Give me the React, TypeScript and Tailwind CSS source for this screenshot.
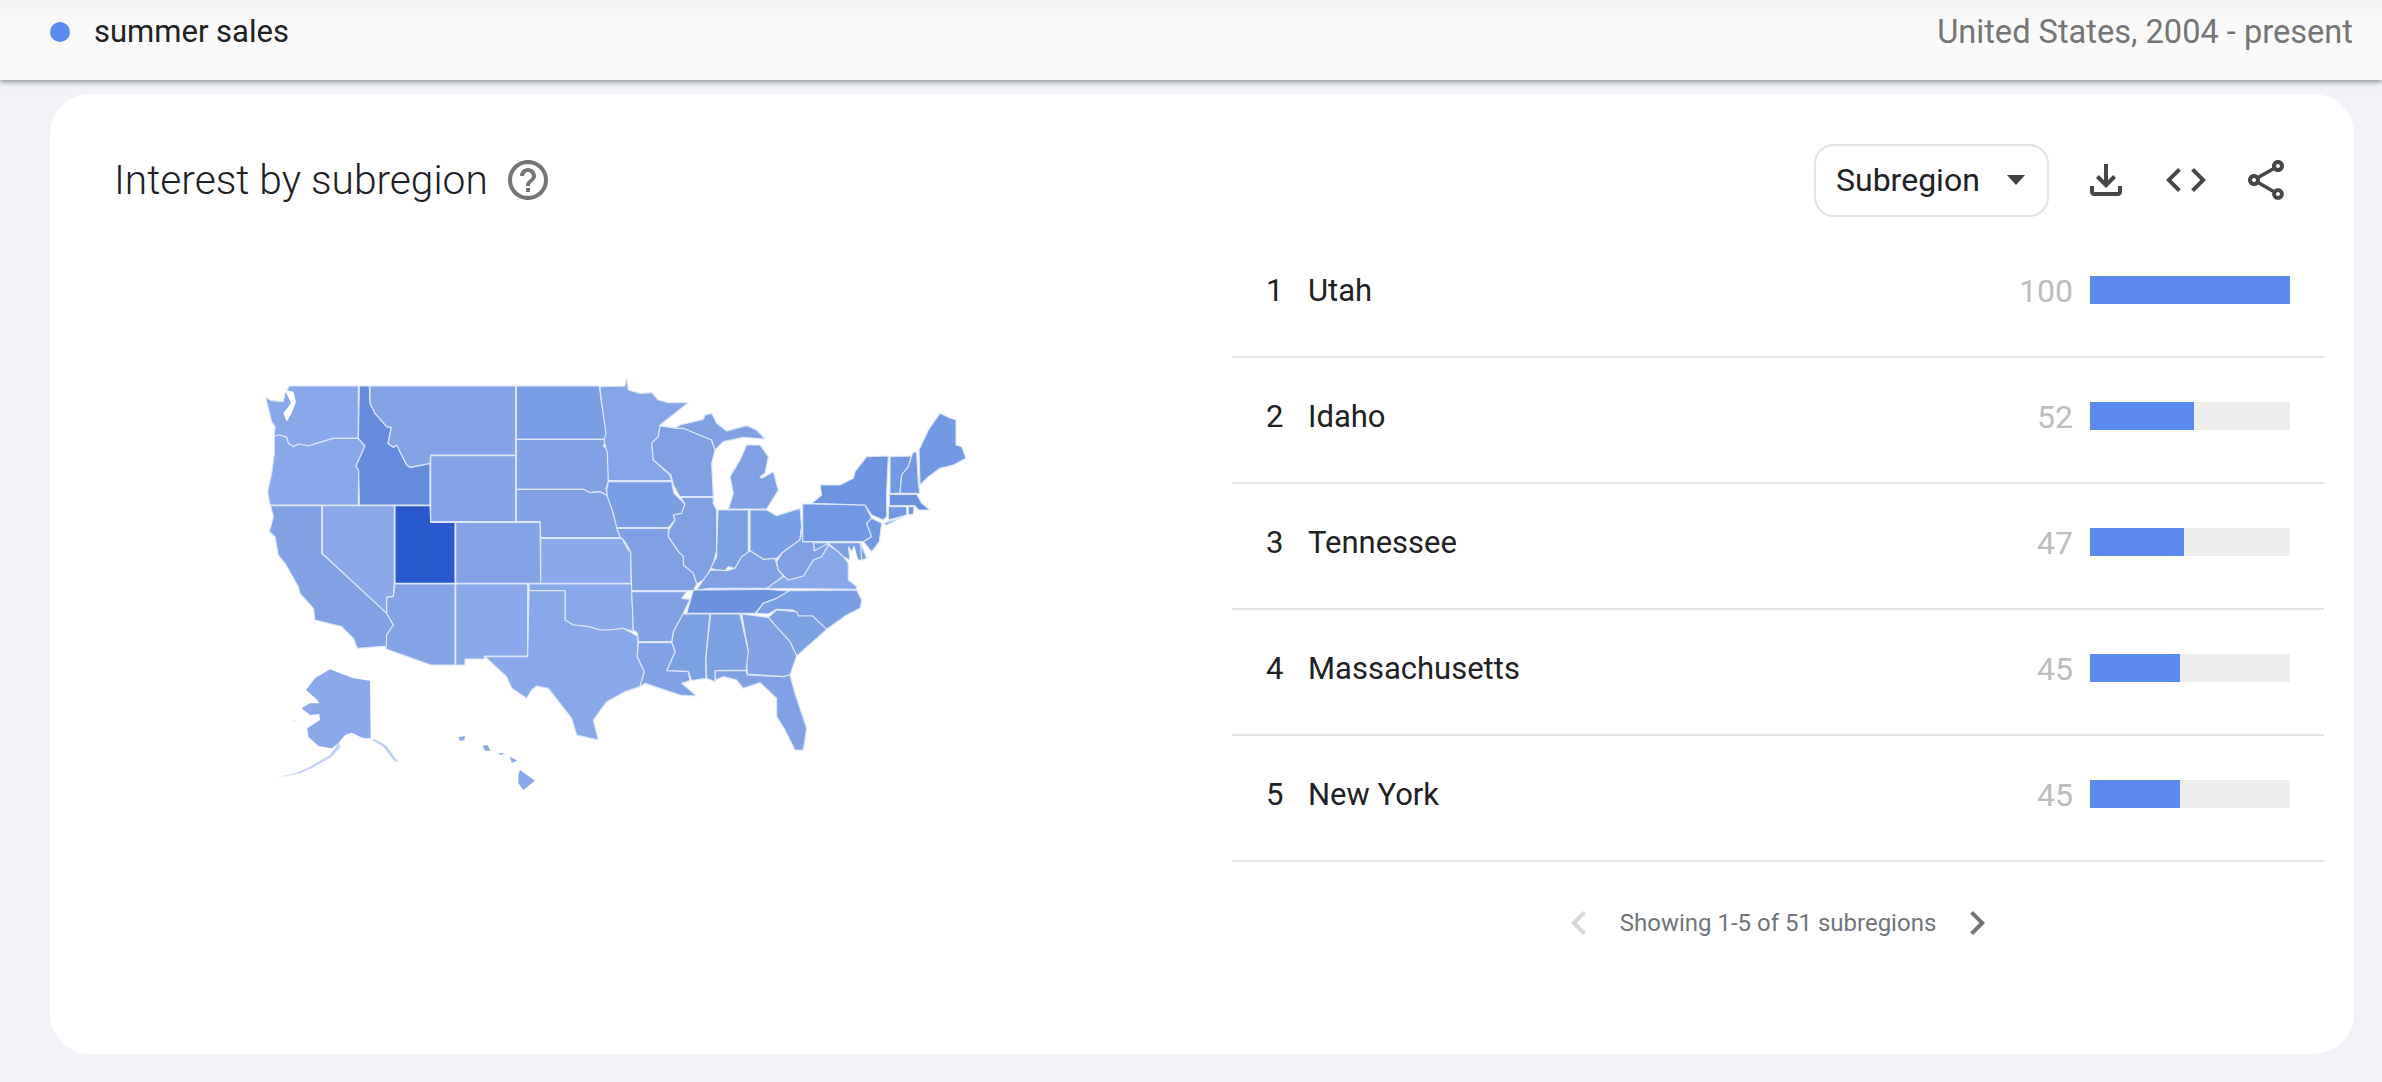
import React from 'react'

const fontClass = "font-['Roboto','Open_Sans',sans-serif]"

type Region = { rank: number; name: string; value: number }

const regions: Region[] = [
  { rank: 1, name: 'Utah', value: 100 },
  { rank: 2, name: 'Idaho', value: 52 },
  { rank: 3, name: 'Tennessee', value: 47 },
  { rank: 4, name: 'Massachusetts', value: 45 },
  { rank: 5, name: 'New York', value: 45 },
]

// west states, map units = 3x page pixels from (230, 360)
const westStates: [string, string][] = [
  ['#87a8ea', '107,112 125,122 160,125 165,100 178,78 385,78 385,235 310,235 260,250 235,258 205,252 190,260 175,250 170,232 150,225 133,228 135,200 125,185'],
  ['#87a8ea', '133,228 150,225 170,232 175,250 190,260 205,252 235,258 260,250 310,235 385,235 405,258 378,318 386,330 385,435 120,435 113,395 125,340 133,280'],
  ['#648bde', '388,78 418,78 420,130 435,160 470,200 484,203 474,250 490,262 500,255 530,315 540,322 600,310 600,435 388,435 386,330 378,318 405,258 385,235'],
  ['#82a3e5', '420,78 857,78 857,285 602,285 600,310 540,322 530,315 500,255 490,262 474,250 484,203 470,200 435,160 420,130'],
  ['#7a9ee3', '859,78 1108,78 1115,130 1130,210 1130,238 859,238'],
  ['#80a2e5', '859,238 1130,238 1120,258 1135,270 1135,365 1128,385 1135,408 1110,395 1080,398 1060,388 859,388'],
  ['#82a3e5', '602,287 857,287 857,485 602,485'],
  ['#80a2e5', '859,388 1060,388 1080,398 1110,395 1135,408 1155,480 1175,533 932,533 930,485 859,485'],
  ['#2858cc', '495,437 600,437 602,487 675,487 675,670 495,670'],
  ['#82a3e6', '677,487 930,487 932,670 677,670'],
  ['#89a9ea', '277,437 493,437 493,670 490,710 470,712 470,760 277,580'],
  ['#80a2e5', '122,437 275,437 275,580 470,760 490,795 470,825 470,858 382,865 370,835 335,800 255,780 250,745 210,700 205,680 165,610 145,585 135,530 118,515 130,470'],
  ['#82a3e6', '495,672 675,672 675,915 603,915 468,867 470,825 490,795 470,760 470,712 490,710'],
  ['#89a9ea', '677,672 893,672 893,888 763,888 763,897 705,897 705,915 677,915'],
  ['#89a9ea', '932,535 1175,535 1195,570 1203,575 1203,670 932,670'],
  ['#87a8e9', '897,672 1205,672 1210,815 1180,805 1140,810 1110,810 1075,800 1030,795 1005,780 1005,692 897,692'],
  ['#87a8e9', '897,692 1005,692 1005,780 1030,795 1075,800 1110,810 1140,810 1180,805 1207,820 1224,830 1222,890 1243,935 1230,980 1185,995 1130,1025 1090,1080 1105,1140 1040,1125 1025,1075 990,1030 955,985 920,978 905,990 890,1015 845,985 830,950 765,890 893,890'],
]

// east states, same scale, origin moved to (600, 360)
const eastStates: [string, string][] = [
  ['#84a5e7', '0,80 75,78 80,55 85,90 120,100 155,98 175,120 205,128 265,128 180,195 175,230 155,250 160,300 210,345 215,362 25,362 22,280 12,240 18,220 5,130'],
  ['#7a9ee3', '25,365 215,365 222,400 255,432 245,460 220,465 225,480 205,503 50,503 40,460 22,410 20,390'],
  ['#7fa1e4', '180,198 230,205 250,205 335,240 345,270 335,310 340,410 240,410 220,375 213,345 160,300 155,250 175,230'],
  ['#7fa1e4', '225,205 240,195 310,178 315,165 335,160 350,190 380,213 440,197 470,210 495,237 430,232 370,245 345,270 335,240 250,205'],
  ['#7fa1e4', '440,255 480,255 505,290 495,340 480,350 485,355 520,335 535,390 500,447 385,447 400,400 390,350 420,300'],
  ['#7fa1e4', '243,412 340,412 340,430 350,450 350,570 340,610 325,640 310,660 290,672 280,640 250,615 250,590 235,575 205,530 207,510 225,480 220,465 245,460 255,432'],
  ['#7ca0e4', '354,450 445,450 445,585 425,590 405,625 385,620 375,632 350,630 332,625 350,590 350,570'],
  ['#7a9ee3', '450,450 500,450 530,467 600,445 605,500 600,540 565,565 545,580 525,600 490,598 450,572'],
  ['#7fa1e4', '332,630 380,632 405,625 425,590 450,572 490,598 525,595 535,630 550,648 505,685 330,685 290,690 310,660'],
  ['#6a92df', '280,690 330,690 500,688 568,693 530,715 490,730 465,760 260,760'],
  ['#7a9ee3', '568,692 770,690 785,720 780,745 740,765 680,808 635,768 590,768 580,750 530,748 505,762 468,760 490,730 530,715'],
  ['#7ca0e4', '505,772 530,750 590,755 595,768 638,768 680,808 590,888 570,845 520,790'],
  ['#80a2e5', '425,762 505,772 520,790 570,845 590,888 570,945 550,950 442,942 438,880 445,875'],
  ['#80a2e5', '345,932 438,932 442,945 550,950 570,945 585,1000 620,1105 610,1170 585,1170 555,1110 530,1070 530,1015 480,968 430,985 410,960 370,950 345,960'],
  ['#7ca0e4', '332,762 420,762 445,875 438,930 345,932 345,965 320,955 317,895'],
  ['#7ca0e4', '250,762 330,762 317,895 318,955 275,962 265,935 200,932 225,875 215,845 220,815 245,765'],
  ['#80a2e5', '115,848 215,848 225,875 200,932 265,935 270,962 245,970 290,1008 240,1005 180,985 135,970 120,980 133,935 112,890'],
  ['#80a2e5', '95,695 260,695 245,715 270,718 250,760 220,815 215,845 115,845 112,818 100,810'],
  ['#7fa1e4', '50,505 205,505 205,530 235,575 250,590 250,615 280,640 290,672 280,692 95,692 92,575 75,545 60,530'],
  ['#87a8e9', '500,685 552,648 565,660 610,648 640,600 665,590 685,555 715,575 730,590 745,610 745,660 770,680 770,688'],
  ['#7fa1e4', '530,605 545,580 565,565 600,540 605,500 608,545 640,545 643,572 680,548 685,555 665,590 640,600 610,648 565,660 552,648 535,630'],
  ['#7198e2', '608,432 635,432 795,435 810,465 815,475 800,490 815,530 790,545 608,545'],
  ['#6d94e0', '635,430 665,405 660,375 720,375 760,355 765,335 800,290 865,288 860,400 860,470 850,480 815,465 795,435'],
  ['#7198e2', '815,475 845,490 838,545 815,575 790,545 815,530 800,490'],
  ['#7ca0e4', '640,548 780,548 790,600 775,600 745,560 750,600 730,590 715,575 685,550 643,572'],
  ['#7ca0e4', '782,548 800,595 785,600'],
  ['#7198e2', '870,290 935,288 925,320 905,345 900,400 870,400'],
  ['#7198e2', '938,278 950,275 955,370 960,400 900,400 905,345 925,320'],
  ['#7198e2', '957,270 985,210 1020,160 1045,172 1068,180 1068,255 1085,260 1098,295 1060,315 1020,325 985,350 960,375'],
  ['#6a92df', '868,403 950,403 965,430 990,450 955,450 945,437 868,437'],
  ['#7198e2', '865,440 920,440 920,465 865,480'],
  ['#7198e2', '925,440 942,440 940,462 925,465'],
  ['#7198e2', '850,490 910,470 860,495'],
]

// alaska and hawaii, no inner borders
const offshore = [
  '300,928 330,940 370,955 420,962 422,1135 400,1135 365,1118 345,1125 325,1150 305,1165 265,1158 235,1130 232,1105 270,1080 268,1062 240,1065 215,1045 240,1030 268,1030 260,1018 228,990 255,955',
  '870,1230 915,1262 880,1290 865,1270 865,1245',
  '840,1190 862,1202 845,1208',
  '758,1158 772,1155 782,1172 765,1172',
  '685,1132 705,1128 703,1140 690,1143',
  '805,1178 828,1182 810,1184',
]

// thin faint bits of alaska
const faintBits = [
  '325,1150 300,1185 240,1220 200,1238 140,1253 210,1240 250,1222 305,1190 332,1160',
  '422,1135 440,1140 470,1158 507,1210 490,1200 460,1160 430,1142',
  '185,1080 205,1088 190,1085',
]

// sound and bay cut-outs
const waterCuts = [
  '165,90 190,95 198,125 185,160 170,185 160,160 183,130',
]

function UsMap() {
  return (
    <svg viewBox="0 0 2250 1320" className="ml-[180px] mt-[128px] h-[440px] w-[750px]">
      <g stroke="#dce6f8" strokeWidth="3.5" strokeLinejoin="round">
        {westStates.map(([fill, points]) => (
          <polygon key={points} fill={fill} points={points} />
        ))}
        <g transform="translate(1110 0)">
          {eastStates.map(([fill, points]) => (
            <polygon key={points} fill={fill} points={points} />
          ))}
          <polygon fill="#ffffff" stroke="none" points="762,555 750,590 768,645 776,605" />
        </g>
      </g>
      {waterCuts.map((points) => (
        <polygon key={points} fill="#ffffff" points={points} />
      ))}
      {offshore.map((points) => (
        <polygon key={points} fill="#89a9ea" points={points} />
      ))}
      {faintBits.map((points) => (
        <polygon key={points} fill="#89a9ea" fillOpacity="0.55" points={points} />
      ))}
    </svg>
  )
}

function MaterialIcon({ d, className }: { d: string; className: string }) {
  return (
    <svg viewBox="0 0 24 24" fill="currentColor" className={className}>
      <path d={d} />
    </svg>
  )
}

const helpPath = 'M11 18h2v-2h-2v2zm1-16C6.48 2 2 6.48 2 12s4.48 10 10 10 10-4.48 10-10S17.52 2 12 2zm0 18c-4.41 0-8-3.59-8-8s3.59-8 8-8 8 3.59 8 8-3.59 8-8 8zm0-14c-2.21 0-4 1.79-4 4h2c0-1.1.9-2 2-2s2 .9 2 2c0 2-3 1.75-3 5h2c0-2.25 3-2.5 3-5 0-2.21-1.79-4-4-4z'
const downloadPath = 'M12 16l-5-5 1.4-1.45 2.6 2.6V4h2v8.15l2.6-2.6L17 11l-5 5zM6 20c-.55 0-1.02-.2-1.41-.59C4.2 19.02 4 18.55 4 18v-3h2v3h12v-3h2v3c0 .55-.2 1.02-.59 1.41-.39.39-.86.59-1.41.59H6z'
const codePath = 'M9.4 16.6L4.8 12l4.6-4.6L8 6l-6 6 6 6 1.4-1.4zm5.2 0l4.6-4.6-4.6-4.6L16 6l6 6-6 6-1.4-1.4z'
const sharePath = 'M18 16.08c-.76 0-1.44.3-1.96.77L8.91 12.7c.05-.23.09-.46.09-.7s-.04-.47-.09-.7l7.05-4.11c.54.5 1.25.81 2.04.81 1.66 0 3-1.34 3-3s-1.34-3-3-3-3 1.34-3 3c0 .24.04.47.09.7L8.04 9.81C7.5 9.31 6.79 9 6 9c-1.66 0-3 1.34-3 3s1.34 3 3 3c.79 0 1.5-.31 2.04-.81l7.12 4.16c-.05.21-.08.43-.08.65 0 1.61 1.31 2.92 2.92 2.92 1.61 0 2.92-1.31 2.92-2.92s-1.31-2.92-2.92-2.92zM18 4c.55 0 1 .45 1 1s-.45 1-1 1-1-.45-1-1 .45-1 1-1zM6 13c-.55 0-1-.45-1-1s.45-1 1-1 1 .45 1 1-.45 1-1 1zm12 7.02c-.55 0-1-.45-1-1s.45-1 1-1 1 .45 1 1-.45 1-1 1z'
const chevronLeft = 'M15.41 7.41L14 6l-6 6 6 6 1.41-1.41L10.83 12z'
const chevronRight = 'M10 6L8.59 7.41 13.17 12l-4.58 4.59L10 18l6-6z'

function RegionRow({ region }: { region: Region }) {
  return (
    <div className="flex h-[126px] items-center border-b-2 border-[#e3e3e3] pb-2 pr-[34px] text-[#202124]">
      <span className="mt-[2px] w-[76px] pl-[34px] text-[31px]">{region.rank}</span>
      <span className="mt-[2px] flex-1 text-[31px]">{region.name}</span>
      <span className="mt-[2px] mr-[17px] text-[32px] text-[#bdbdbd]">{region.value}</span>
      <div className="h-[28px] w-[200px] bg-[#ededed]">
        <div className="h-full bg-[#5b8bf0]" style={{ width: `${region.value}%` }} />
      </div>
    </div>
  )
}

export default function App() {
  return (
    <div className={`h-[1082px] w-[2382px] overflow-hidden bg-[#f1f3f8] ${fontClass}`}>
      <header className="flex h-20 items-center justify-between bg-gradient-to-b from-[#f3f3f3] to-[#fafafa] to-30% pb-4 pl-[50px] pr-[29px] shadow-[0_2px_5px_rgba(60,64,67,0.55)]">
        <div className="flex items-center">
          <span className="mr-[24px] h-5 w-5 rounded-full bg-[#5b8bf0]" />
          <span className="text-[31px] text-[#202124]">summer sales</span>
        </div>
        <span className="text-[32.6px] text-[#757575]">United States, 2004 - present</span>
      </header>

      <main className="ml-[50px] mr-[28px] mt-[14px] h-[960px] rounded-[40px] bg-white pt-[50px]">
        <div className="flex h-[73px] items-center justify-between pl-[64px] pr-[64px]">
          <div className="flex items-center">
            <h2 className="text-[40.7px] font-[350] text-[#202124]">Interest by subregion</h2>
            <MaterialIcon d={helpPath} className="ml-[16px] h-12 w-12 text-[#757575]" />
          </div>
          <div className="flex items-center">
            <div className="flex h-[73px] w-[235px] items-center rounded-[20px] border-2 border-[#e3e3e3] pb-[2px] pl-[20px] text-[32px] text-[#202124]">
              Subregion
              <span className="ml-[27px] h-0 w-0 border-x-[9px] border-t-[10px] border-x-transparent border-t-[#3c4043]" />
            </div>
            <MaterialIcon d={downloadPath} className="ml-[33px] mb-[1px] h-12 w-12 text-[#444746]" />
            <MaterialIcon d={codePath} className="ml-[32px] mb-[1px] h-12 w-12 text-[#444746]" />
            <MaterialIcon d={sharePath} className="ml-[32px] mb-[1px] h-12 w-12 text-[#444746]" />
          </div>
        </div>

        <div className="mt-[15px] grid grid-cols-[1182px_1092px]">
          <div>
            <UsMap />
          </div>
          <div>
            {regions.map((region) => (
              <RegionRow key={region.rank} region={region} />
            ))}
            <div className="flex h-[122px] items-center justify-center text-[24px] text-[#70757a]">
              <MaterialIcon d={chevronLeft} className="h-12 w-12 text-[#d6d6d6]" />
              <span className="mx-[17px]">Showing 1-5 of 51 subregions</span>
              <MaterialIcon d={chevronRight} className="h-12 w-12 text-[#70757a]" />
            </div>
          </div>
        </div>
      </main>
    </div>
  )
}
